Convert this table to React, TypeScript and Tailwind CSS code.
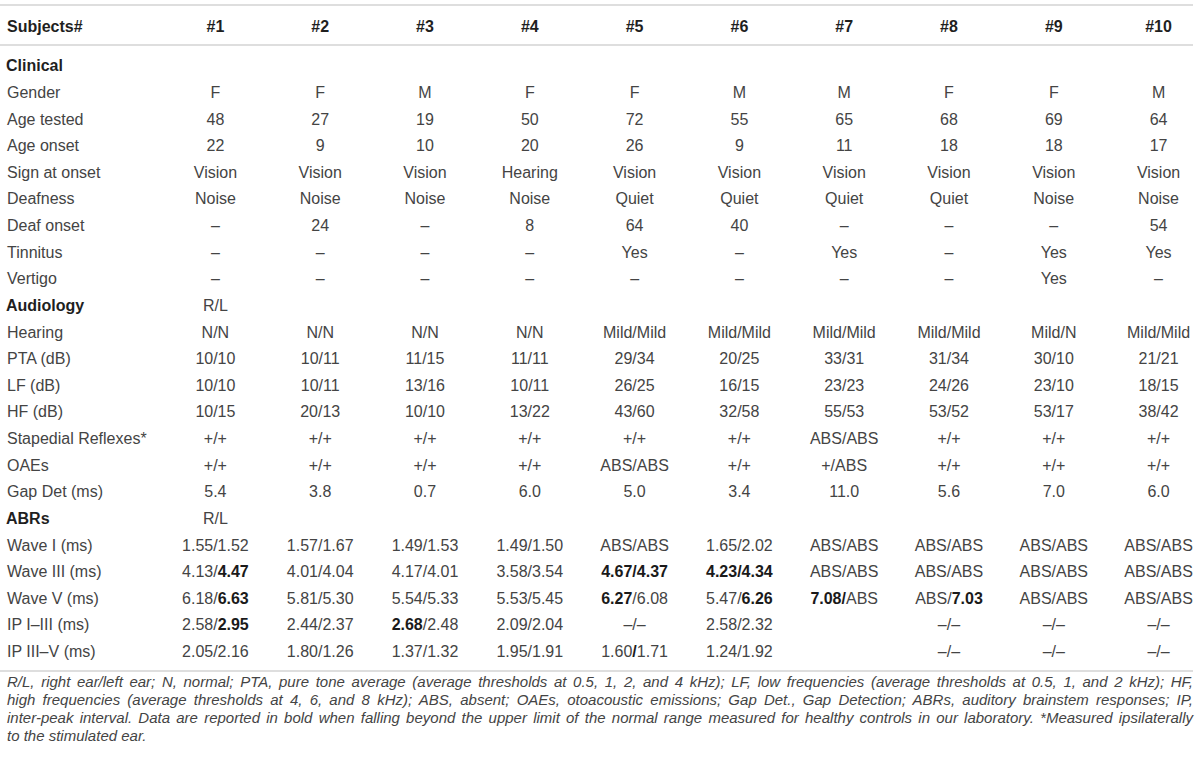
import React from "react";

type Row = { label: string; bold?: boolean; cells: string[] };

const D = "–";
const rows: Row[] = [
  { label: "Clinical", bold: true, cells: [] },
  { label: "Gender", cells: ["F", "F", "M", "F", "F", "M", "M", "F", "F", "M"] },
  { label: "Age tested", cells: ["48", "27", "19", "50", "72", "55", "65", "68", "69", "64"] },
  { label: "Age onset", cells: ["22", "9", "10", "20", "26", "9", "11", "18", "18", "17"] },
  { label: "Sign at onset", cells: ["Vision", "Vision", "Vision", "Hearing", "Vision", "Vision", "Vision", "Vision", "Vision", "Vision"] },
  { label: "Deafness", cells: ["Noise", "Noise", "Noise", "Noise", "Quiet", "Quiet", "Quiet", "Quiet", "Noise", "Noise"] },
  { label: "Deaf onset", cells: [D, "24", D, "8", "64", "40", D, D, D, "54"] },
  { label: "Tinnitus", cells: [D, D, D, D, "Yes", D, "Yes", D, "Yes", "Yes"] },
  { label: "Vertigo", cells: [D, D, D, D, D, D, D, D, "Yes", D] },
  { label: "Audiology", bold: true, cells: ["R/L"] },
  { label: "Hearing", cells: ["N/N", "N/N", "N/N", "N/N", "Mild/Mild", "Mild/Mild", "Mild/Mild", "Mild/Mild", "Mild/N", "Mild/Mild"] },
  { label: "PTA (dB)", cells: ["10/10", "10/11", "11/15", "11/11", "29/34", "20/25", "33/31", "31/34", "30/10", "21/21"] },
  { label: "LF (dB)", cells: ["10/10", "10/11", "13/16", "10/11", "26/25", "16/15", "23/23", "24/26", "23/10", "18/15"] },
  { label: "HF (dB)", cells: ["10/15", "20/13", "10/10", "13/22", "43/60", "32/58", "55/53", "53/52", "53/17", "38/42"] },
  { label: "Stapedial Reflexes*", cells: ["+/+", "+/+", "+/+", "+/+", "+/+", "+/+", "ABS/ABS", "+/+", "+/+", "+/+"] },
  { label: "OAEs", cells: ["+/+", "+/+", "+/+", "+/+", "ABS/ABS", "+/+", "+/ABS", "+/+", "+/+", "+/+"] },
  { label: "Gap Det (ms)", cells: ["5.4", "3.8", "0.7", "6.0", "5.0", "3.4", "11.0", "5.6", "7.0", "6.0"] },
  { label: "ABRs", bold: true, cells: ["R/L"] },
  { label: "Wave I (ms)", cells: ["1.55/1.52", "1.57/1.67", "1.49/1.53", "1.49/1.50", "ABS/ABS", "1.65/2.02", "ABS/ABS", "ABS/ABS", "ABS/ABS", "ABS/ABS"] },
  { label: "Wave III (ms)", cells: ["4.13/**4.47**", "4.01/4.04", "4.17/4.01", "3.58/3.54", "**4.67/4.37**", "**4.23/4.34**", "ABS/ABS", "ABS/ABS", "ABS/ABS", "ABS/ABS"] },
  { label: "Wave V (ms)", cells: ["6.18/**6.63**", "5.81/5.30", "5.54/5.33", "5.53/5.45", "**6.27**/6.08", "5.47/**6.26**", "**7.08/**ABS", "ABS/**7.03**", "ABS/ABS", "ABS/ABS"] },
  { label: "IP I–III (ms)", cells: ["2.58/**2.95**", "2.44/2.37", "**2.68**/2.48", "2.09/2.04", "–/–", "2.58/2.32", "", "–/–", "–/–", "–/–"] },
  { label: "IP III–V (ms)", cells: ["2.05/2.16", "1.80/1.26", "1.37/1.32", "1.95/1.91", "1.60**/**1.71", "1.24/1.92", "", "–/–", "–/–", "–/–"] },
];

function Cell({ text }: { text: string }) {
  const parts = text.split("**");
  return (
    <>
      {parts.map((p, i) =>
        i % 2 === 1 ? (
          <b key={i} className="font-bold text-[#1a1a1a]">
            {p}
          </b>
        ) : (
          <span key={i}>{p}</span>
        )
      )}
    </>
  );
}

const grid = "grid grid-cols-[163px_repeat(10,104.8px)]";

export default function App() {
  return (
    <div
      className="w-[1200px] h-[763px] overflow-hidden bg-white text-[16px] text-[#444]"
      style={{ fontFamily: '"Liberation Sans", Arial, sans-serif' }}
    >
      <div className="mt-[4px] h-[2px] w-[1193px] bg-[#dedede]" />
      <div className={`${grid} h-[38px] pt-[4px] items-center font-bold text-[#1f1f1f]`}>
        <div className="pl-[7px]">Subjects#</div>
        {["#1", "#2", "#3", "#4", "#5", "#6", "#7", "#8", "#9", "#10"].map((h) => (
          <div key={h} className="text-center">
            {h}
          </div>
        ))}
      </div>
      <div className="h-[2px] w-[1193px] bg-[#dedede]" />
      <div className="pt-[7px]">
        {rows.map((r) => (
          <div key={r.label} className={`${grid} h-[26.64px] items-center`}>
            <div className={r.bold ? "pl-[6px] font-bold text-[#1f1f1f]" : "pl-[7px]"}>{r.label}</div>
            {r.cells.map((c, i) => (
              <div key={i} className="text-center whitespace-nowrap">
                <Cell text={c} />
              </div>
            ))}
          </div>
        ))}
      </div>
      <div className="mt-[5px] h-[2px] w-[1193px] bg-[#dedede]" />
      <div className="pt-[1px] pl-[7px] w-[1193px] italic text-[15px] leading-[18px] text-[#444]">
        <div className="whitespace-nowrap text-justify [text-align-last:justify]">
          R/L, right ear/left ear; N, normal; PTA, pure tone average (average thresholds at 0.5, 1, 2, and 4 kHz); LF, low frequencies (average thresholds at 0.5, 1, and 2 kHz); HF,
        </div>
        <div className="whitespace-nowrap text-justify [text-align-last:justify]">
          high frequencies (average thresholds at 4, 6, and 8 kHz); ABS, absent; OAEs, otoacoustic emissions; Gap Det., Gap Detection; ABRs, auditory brainstem responses; IP,
        </div>
        <div className="whitespace-nowrap text-justify [text-align-last:justify]">
          inter-peak interval. Data are reported in bold when falling beyond the upper limit of the normal range measured for healthy controls in our laboratory. *Measured ipsilaterally
        </div>
        <div className="whitespace-nowrap">to the stimulated ear.</div>
      </div>
    </div>
  );
}
